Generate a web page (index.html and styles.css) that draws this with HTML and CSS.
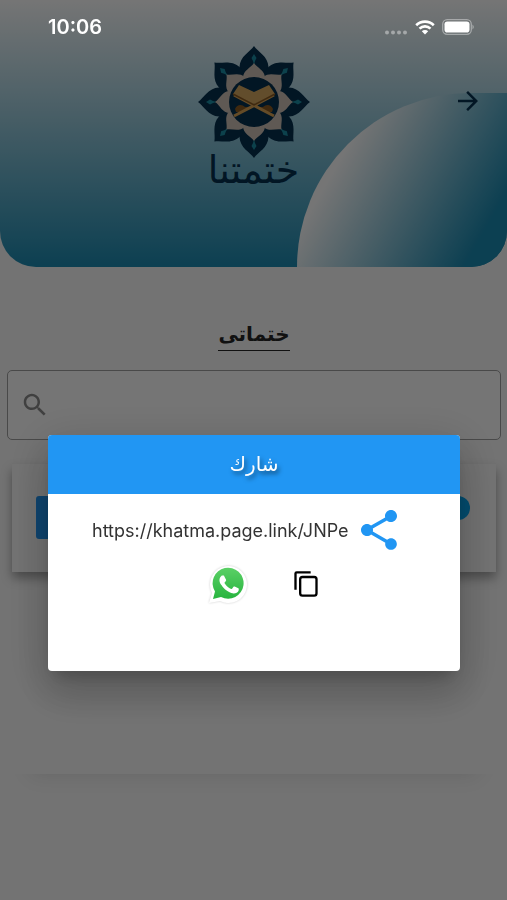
FILE: index.html
```html
<!DOCTYPE html>
<html lang="ar">
<head>
    <meta charset="UTF-8">
    <meta name="viewport" content="width=device-width, initial-scale=1">
    <title>ختماتى</title>
    <link rel="stylesheet" href="styles.css">
</head>
<body>
    <div class="page">
        <header class="header">
            <div class="header-circle"></div>
            <div class="logo">
                <svg class="logo-flower" viewBox="-56 -56 112 112" aria-hidden="true">
                    <defs>
                        <g id="petal">
                            <path fill="#05304f" d="M0-56C4-50 14-46 14.500-35C14.500-29 12-25 10-16H-10C-12-25-14.500-29-14.500-35C-14-46-4-50 0-56Z"/>
                            <path fill="#1c8fa5" d="M0-48L2.500-44L1-41L0-37L-1-41L-2.500-44Z"/>
                        </g>
                        <path id="inner-petal" fill="#cfc3b8" d="M0-39C3-34 11-32 11-24L9-16H-9L-11-24C-11-32-3-34 0-39Z"/>
                    </defs>
                    <use href="#petal"/>
                    <use href="#petal" transform="rotate(45)"/>
                    <use href="#petal" transform="rotate(90)"/>
                    <use href="#petal" transform="rotate(135)"/>
                    <use href="#petal" transform="rotate(180)"/>
                    <use href="#petal" transform="rotate(225)"/>
                    <use href="#petal" transform="rotate(270)"/>
                    <use href="#petal" transform="rotate(315)"/>
                    <use href="#inner-petal"/>
                    <use href="#inner-petal" transform="rotate(45)"/>
                    <use href="#inner-petal" transform="rotate(90)"/>
                    <use href="#inner-petal" transform="rotate(135)"/>
                    <use href="#inner-petal" transform="rotate(180)"/>
                    <use href="#inner-petal" transform="rotate(225)"/>
                    <use href="#inner-petal" transform="rotate(270)"/>
                    <use href="#inner-petal" transform="rotate(315)"/>
                    <circle r="25" fill="#05304f"/>
                    <!-- open book on its stand -->
                    <path fill="#8a5a22" d="M-19 7C-17 2-12 2-9 5L-3 5L-12 10L-18 10ZM19 7C17 2 12 2 9 5L3 5L12 10L18 10Z"/>
                    <path fill="none" stroke="#dba455" stroke-width="3" d="M-20-7L20 14M20-7L-20 14"/>
                    <path fill="#d6a860" d="M-15-17L0-10L15-17L21-8L0 2L-21-8Z"/>
                    <path fill="none" stroke="#8a5a22" stroke-width="1.500" d="M-21-8L0 3L21-8"/>
                </svg>
                <span class="logo-name">ختمتنا</span>
            </div>
            <button class="next-button" type="button" aria-label="التالي">
                <svg viewBox="0 0 24 24" width="30" height="30"><path d="M12 4l-1.41 1.41L16.17 11H4v2h12.17l-5.58 5.59L12 20l8-8z"/></svg>
            </button>
        </header>

        <main class="main">
            <h1 class="page-title"><span>ختماتى</span></h1>
            <label class="search">
                <svg viewBox="0 0 24 24" width="30" height="30"><path d="M15.5 14h-.79l-.28-.27C15.41 12.59 16 11.11 16 9.5 16 5.91 13.09 3 9.5 3S3 5.91 3 9.5 5.91 16 9.5 16c1.61 0 3.09-.59 4.23-1.57l.27.28v.79l5 4.99L20.49 19l-4.99-5zm-6 0C7.01 14 5 11.99 5 9.5S7.01 5 9.5 5 14 7.01 14 9.5 11.99 14 9.5 14z"/></svg>
                <input type="search" dir="rtl" aria-label="بحث">
            </label>
            <div class="list">
                <div class="card">
                    <button class="card-button" type="button" aria-label="شارك"></button>
                    <div class="card-progress"></div>
                </div>
            </div>
        </main>
    </div>

    <div class="overlay">
        <div class="dialog" role="dialog" aria-labelledby="dialog-title">
            <h2 class="dialog-title" id="dialog-title">شارك</h2>
            <div class="dialog-body">
                <div class="link-row">
                    <a href="https://khatma.page.link/JNPe">https://khatma.page.link/JNPe</a>
                    <button class="share-button" type="button" aria-label="شارك">
                        <svg viewBox="0 0 24 24" width="48" height="48"><path d="M18 16.08c-.76 0-1.44.3-1.96.77L8.91 12.7c.05-.23.09-.46.09-.7s-.04-.47-.09-.7l7.05-4.11c.54.5 1.25.81 2.04.81 1.66 0 3-1.34 3-3s-1.34-3-3-3-3 1.34-3 3c0 .24.04.47.09.7L8.04 9.81C7.5 9.31 6.79 9 6 9c-1.66 0-3 1.34-3 3s1.34 3 3 3c.79 0 1.5-.31 2.04-.81l7.12 4.16c-.05.21-.08.43-.08.65 0 1.61 1.31 2.92 2.92 2.92s2.92-1.31 2.92-2.92-1.31-2.92-2.92-2.92z"/></svg>
                    </button>
                </div>
                <div class="action-row">
                    <button type="button" aria-label="WhatsApp">
                        <svg class="whatsapp" viewBox="0 0 40 40" width="40" height="40">
                            <defs>
                                <linearGradient id="green" x1="0" y1="0" x2="0" y2="1">
                                    <stop offset="0" stop-color="#5bd066"/>
                                    <stop offset="1" stop-color="#27b43e"/>
                                </linearGradient>
                            </defs>
                            <path fill="#fff" d="M1 39L4 29A18.500 18.500 0 1 1 12 37Z"/>
                            <path fill="url(#green)" d="M5 35L7 27.500A15.500 15.500 0 1 1 13 33Z"/>
                            <path fill="#fff" d="M15.200 11.800c-.4-.9-.8-.9-1.200-.9h-1c-.4 0-1 .1-1.500.7-.5.600-1.900 1.900-1.900 4.500s1.900 5.200 2.200 5.500c.3.400 3.800 6 9.300 8.100 4.600 1.800 5.500 1.400 6.500 1.300 1-.1 3.200-1.300 3.600-2.600.4-1.300.4-2.300.3-2.600-.1-.2-.5-.4-1-.7l-3.600-1.700c-.5-.2-.9-.3-1.300.3l-1.700 2.100c-.3.400-.6.400-1.100.1-.6-.2-2.300-.8-4.300-2.700-1.600-1.400-2.700-3.200-3-3.700-.3-.6 0-.8.2-1.100l.8-.9.600-.9c.2-.4.100-.7 0-1z" transform="translate(3 2) scale(.88)"/>
                        </svg>
                    </button>
                    <button type="button" aria-label="نسخ">
                        <svg viewBox="0 0 24 24" width="28" height="28"><path fill="none" stroke="#000" stroke-width="2" stroke-linejoin="round" d="M3 17V3Q3 2 4 2H16M9 6H19Q21 6 21 8V20Q21 22 19 22H9Q7 22 7 20V8Q7 6 9 6Z"/></svg>
                    </button>
                </div>
            </div>
        </div>
    </div>

    <div class="status-bar">
        <span>10:06</span>
        <div class="status-icons">
            <svg viewBox="0 0 24 5" width="24" height="5" fill="#fff" opacity=".4"><circle cx="3" cy="2.500" r="2"/><circle cx="9" cy="2.500" r="2"/><circle cx="15" cy="2.500" r="2"/><circle cx="21" cy="2.500" r="2"/></svg>
            <svg viewBox="0 0 20 15" width="20" height="15">
                <path fill="none" stroke="#fff" stroke-width="2.600" d="M1.200 5.200A12.600 12.600 0 0 1 18.800 5.200M4.500 8.600A8 8 0 0 1 15.500 8.600"/>
                <path fill="#fff" d="M10 14.500L6.800 11.300A4.600 4.600 0 0 1 13.200 11.300Z"/>
            </svg>
            <svg viewBox="0 0 33 16" width="33" height="16">
                <rect x=".7" y=".7" width="28.600" height="14.600" rx="4.500" fill="none" stroke="#fff" stroke-width="1.300" opacity=".4"/>
                <rect x="2.500" y="2.500" width="25" height="11" rx="2.800" fill="#fff"/>
                <path fill="#fff" opacity=".45" d="M30.500 5.500Q33 8 30.500 10.500Z"/>
            </svg>
        </div>
    </div>
</body>
</html>
```
FILE: styles.css
```css
* {
    box-sizing: border-box;
}

body {
    margin: 0;
    font-family: Inter, "DejaVu Sans", sans-serif;
    background-color: #fafafa;
    color: #262626;
}

button {
    display: flex;
    padding: 0;
    border: none;
    background: none;
}

svg {
    display: block;
    flex-shrink: 0;
}

.page {
    min-height: 100vh;
}

.header {
    position: relative;
    height: 267px;
    padding-top: 46px;
    border-radius: 0 0 36px 36px;
    background: linear-gradient(#fff, #1c8bb2);
    overflow: hidden;
}

.header-circle {
    position: absolute;
    right: 0;
    bottom: 0;
    width: 210px;
    height: 174px;
    border-top-left-radius: 174px;
    background: linear-gradient(120deg, #fff 26%, #1c8bb2 86%);
}

.logo {
    display: flex;
    flex-direction: column;
    align-items: center;
}

    .logo-flower {
        width: 112px;
        height: 112px;
    }

    .logo-name {
        margin-top: -12px;
        font-family: "DejaVu Sans", sans-serif;
        font-size: 38px;
        line-height: 48px;
        color: #05304f;
    }

.next-button {
    position: absolute;
    top: 86px;
    right: 24px;
    fill: #05304f;
}

.main {
    padding: 52px 6px 0 7px;
}

.page-title {
    margin: 0 0 19px;
    text-align: center;
    font-family: "DejaVu Sans", sans-serif;
    font-size: 20px;
    line-height: 31px;
}

    .page-title span {
        display: inline-block;
        border-bottom: 1px solid #262626;
    }

.search {
    display: flex;
    align-items: center;
    height: 70px;
    padding: 0 12px;
    border: 1px solid #a0a0a0;
    border-radius: 5px;
    background-color: #fff;
    fill: #8c8c8c;
}

    .search input {
        flex: 1;
        min-width: 0;
        height: 48px;
        border: none;
        background: none;
        outline: none;
    }

.list {
    height: 334px;
    padding: 24px 5px 0;
    box-shadow: 0 24px 20px -24px rgba(0, 0, 0, .12);
}

.card {
    display: flex;
    justify-content: space-between;
    height: 108px;
    padding: 32px 26px 0 24px;
    background-color: #fafafa;
    box-shadow: 0 6px 10px rgba(0, 0, 0, .35);
}

    .card-button {
        width: 96px;
        height: 43px;
        border-radius: 3px;
        background-color: #2196f3;
    }

    .card-progress {
        width: 120px;
        height: 24px;
        border-radius: 12px;
        background-color: #03a9f4;
    }

.overlay {
    position: fixed;
    inset: 0;
    padding: 435px 47px 0 48px;
    background-color: rgba(0, 0, 0, .54);
}

.dialog {
    border-radius: 4px;
    background-color: #fff;
    box-shadow: 0 11px 15px -7px rgba(0, 0, 0, .2), 0 24px 38px 3px rgba(0, 0, 0, .14), 0 9px 46px 8px rgba(0, 0, 0, .12);
    overflow: hidden;
}

.dialog-title {
    margin: 0;
    background-color: #2196f3;
    color: #fff;
    text-align: center;
    font-family: "DejaVu Sans", sans-serif;
    font-size: 20px;
    font-weight: 400;
    line-height: 59px;
    text-shadow: 2px 3px 4px rgba(0, 0, 0, .5);
}

.dialog-body {
    padding: 12px 44px 67px;
}

.link-row {
    display: flex;
    align-items: center;
    gap: 6px;
}

    .link-row a {
        color: #333;
        font-size: 18px;
        text-decoration: none;
    }

    .share-button {
        fill: #2196f3;
    }

.action-row {
    display: flex;
    justify-content: center;
    align-items: center;
    gap: 44px;
    margin-top: 10px;
    padding-left: 20px;
}

    .whatsapp {
        filter: drop-shadow(0 0 1px rgba(0, 0, 0, .2));
    }

.status-bar {
    position: absolute;
    top: 0;
    left: 0;
    right: 0;
    display: flex;
    justify-content: space-between;
    align-items: center;
    height: 54px;
    padding: 0 32px 0 48px;
    color: #fff;
    font-size: 20px;
    font-weight: 600;
}

    .status-icons {
        display: flex;
        align-items: center;
        gap: 7px;
    }

        .status-icons svg:first-child {
            align-self: flex-end;
        }
```
